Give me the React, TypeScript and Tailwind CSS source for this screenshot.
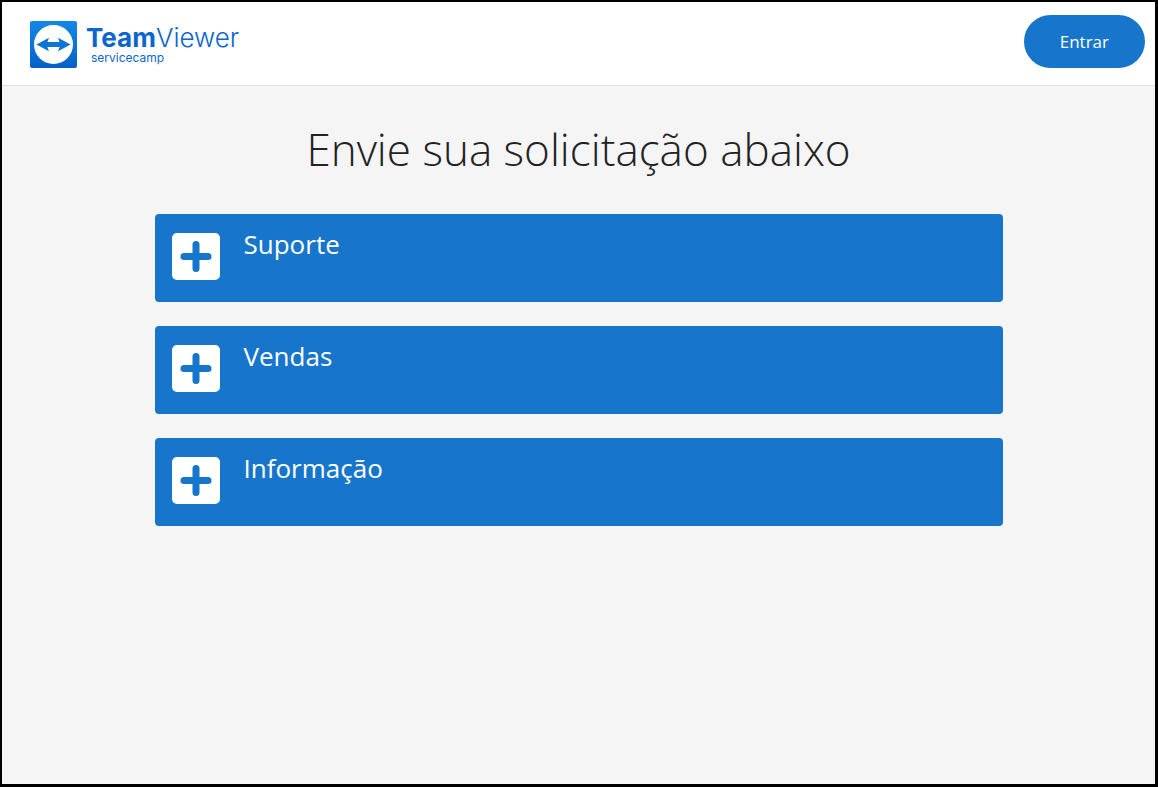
import { useState } from "react";

interface Category {
  id: string;
  name: string;
}

const CATEGORIES: Category[] = [
  { id: "support", name: "Suporte" },
  { id: "sales", name: "Vendas" },
  { id: "info", name: "Informação" },
];

function Logo() {
  return (
    <a href="#" className="flex items-center gap-2 text-[#0a66cf]">
      <svg viewBox="0 0 47 47" className="size-[47px]" aria-hidden="true">
        <defs>
          <linearGradient id="logo-bg" x1="0" y1="0" x2="0" y2="1">
            <stop offset="0" stopColor="#1388e6" />
            <stop offset="1" stopColor="#0560c8" />
          </linearGradient>
        </defs>
        <rect width="47" height="47" rx="2" fill="url(#logo-bg)" />
        <circle cx="23.5" cy="23.5" r="19.5" fill="#fff" />
        <path
          d="M6.4 23.500 19 16.800l-1.600 4.200h12.200L28 16.800l12.600 6.700L28 30.200l1.600-4.200H17.400l1.600 4.200z"
          fill="#0c74d9"
        />
      </svg>
      <span className="flex flex-col font-['Inter','Liberation_Sans',sans-serif]">
        <span className="pl-px text-[26px] leading-[26px]">
          <span className="font-bold">Team</span>
          <span className="font-light">Viewer</span>
        </span>
        <span className="pl-1.5 text-[12px] leading-[14px]">servicecamp</span>
      </span>
    </a>
  );
}

function PlusIcon() {
  return (
    <svg viewBox="0 0 48 48" className="size-12 shrink-0" aria-hidden="true">
      <rect width="48" height="47" rx="5" fill="#fff" />
      <path
        d="M24 11.500v24M12 23.500h24"
        stroke="#1775cb"
        strokeWidth="7"
        strokeLinecap="round"
      />
    </svg>
  );
}

export default function App() {
  const [selected, setSelected] = useState<string | null>(null);

  return (
    <div className="flex min-h-screen flex-col border-2 border-r-3 border-b-3 border-black bg-[#f5f5f5] font-['Open_Sans','Noto_Sans',sans-serif]">
      <header className="flex items-end justify-between border-b border-[#e0e0e0] bg-white pt-[13px] pr-2.5 pb-[17px] pl-7">
        <Logo />
        <button
          type="button"
          className="rounded-full bg-[#1775cb] px-9 py-[13px] text-[17px] leading-[27px] text-white"
        >
          Entrar
        </button>
      </header>

      <main className="mx-auto w-full max-w-[848px] flex-1">
        <h1 className="mt-8 text-center text-[44px] leading-[62px] font-light text-[#222]">
          Envie sua solicitação abaixo
        </h1>
        <ul className="mt-[34px] flex flex-col gap-6">
          {CATEGORIES.map((category) => (
            <li key={category.id}>
              <button
                type="button"
                aria-pressed={selected === category.id}
                onClick={() => setSelected(category.id)}
                className="flex h-[88px] w-full items-start gap-6 rounded-sm bg-[#1775cb] px-[17px] pt-[19px] text-left text-white"
              >
                <PlusIcon />
                <span className="text-[26px] leading-[22px]">
                  {category.name}
                </span>
              </button>
            </li>
          ))}
        </ul>
      </main>
    </div>
  );
}
